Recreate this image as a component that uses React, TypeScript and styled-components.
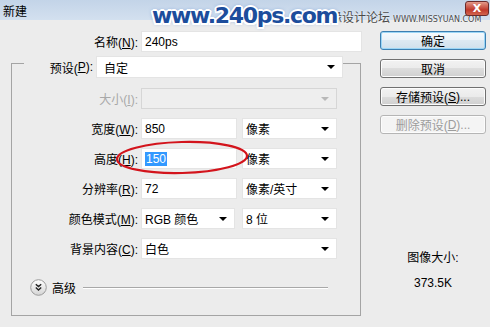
import styled, { createGlobalStyle } from 'styled-components';

const GlobalStyle = createGlobalStyle`
  body {
    margin: 0;
    font-family: "Liberation Sans", "Noto Sans CJK SC", sans-serif;
    font-size: 12px;
    color: #000;
  }
`;

const Window = styled.div`
  position: relative;
  width: 490px;
  height: 327px;
  overflow: hidden;
  background: #ececec;
`;

const TitleBar = styled.div`
  height: 20px;
  display: flex;
  align-items: center;
  padding-left: 3px;
  background: linear-gradient(#c3d4e8, #d3e0ef);
  font-size: 12px;
`;

const Watermark = styled.div`
  position: absolute;
  left: 152px;
  top: 3px;
  font-family: "DejaVu Sans", sans-serif;
  font-weight: bold;
  font-size: 22px;
  letter-spacing: -1.3px;
  color: #1c4d9c;
  text-shadow:
    -2px 0 0 #fff, 2px 0 0 #fff, 0 -2px 0 #fff, 0 2px 0 #fff,
    -1.5px -1.5px 0 #fff, 1.5px 1.5px 0 #fff, -1.5px 1.5px 0 #fff, 1.5px -1.5px 0 #fff,
    0 0 4px #3a6fc0;
`;

const SiteMark = styled.div`
  position: absolute;
  left: 318px;
  top: 8px;
  display: flex;
  align-items: baseline;
  gap: 3px;
  white-space: nowrap;
  color: #4a4a4a;
  text-shadow: 0 0 2px #fff;
  font-size: 12px;
`;

const SiteUrl = styled.span`
  font-family: "DejaVu Sans", sans-serif;
  font-size: 8px;
`;

const CloseButton = styled.div`
  position: absolute;
  right: 1px;
  top: 1px;
  width: 24px;
  height: 15px;
  border-radius: 3px;
  border: 1px solid #6b2b2b;
  background: linear-gradient(#e39a8a, #c0392b 60%, #d2654f);
  color: #fff;
  font-family: "DejaVu Sans", sans-serif;
  font-weight: bold;
  font-size: 11px;
  display: flex;
  align-items: center;
  justify-content: center;
  box-sizing: border-box;
`;

const Content = styled.div`
  display: flex;
  padding-top: 11px;
`;

const LeftPane = styled.div`
  width: 362px;
  display: flex;
  flex-direction: column;
`;

const RightPane = styled.div`
  margin-left: 18px;
  width: 106px;
  display: flex;
  flex-direction: column;
  gap: 9px;
`;

const Row = styled.div`
  display: flex;
  align-items: center;
  height: 21px;
  gap: 3px;
`;

const Label = styled.label<{ $width: number; $disabled?: boolean }>`
  width: ${({ $width }) => $width}px;
  flex-shrink: 0;
  text-align: right;
  white-space: nowrap;
  color: ${({ $disabled }) => ($disabled ? '#a8a8a8' : '#000')};
`;

const Field = styled.div<{ $width: number; $disabled?: boolean; $indent?: number }>`
  position: relative;
  width: ${({ $width }) => $width}px;
  height: 100%;
  box-sizing: border-box;
  display: flex;
  align-items: center;
  padding-left: ${({ $indent }) => $indent ?? 3}px;
  background: ${({ $disabled }) => ($disabled ? '#eeeeee' : '#fff')};
  border: 1px solid ${({ $disabled }) => ($disabled ? '#d6d6d6' : '#e4e4e4')};
  white-space: nowrap;
`;

const Arrow = styled.span<{ $disabled?: boolean }>`
  position: absolute;
  right: 7px;
  top: 50%;
  margin-top: -2px;
  width: 0;
  height: 0;
  border-left: 4px solid transparent;
  border-right: 4px solid transparent;
  border-top: 4px solid ${({ $disabled }) => ($disabled ? '#b8b8b8' : '#000')};
`;

const Selected = styled.span`
  background: #3399ff;
  color: #fff;
  padding: 0 1px;
`;

const GroupBox = styled.div`
  margin: 11px 0 0 11px;
  width: 350px;
  height: 253px;
  box-sizing: border-box;
  border: 1px solid #a4a4a4;
  display: flex;
  flex-direction: column;
`;

const PresetRow = styled(Row)`
  margin: -8px 0 0 12px;
  height: 22px;
  gap: 0;
`;

const PresetLabel = styled.label`
  width: 72px;
  height: 100%;
  box-sizing: border-box;
  padding-right: 3px;
  display: flex;
  align-items: center;
  justify-content: flex-end;
  background: #ececec;
`;

const FieldList = styled.div`
  margin-top: 10px;
  display: flex;
  flex-direction: column;
  gap: 9px;
`;

const Pair = styled.div<{ $gap: number }>`
  display: flex;
  height: 100%;
  gap: ${({ $gap }) => $gap}px;
`;

const AdvancedRow = styled.div`
  margin: 19px 32px 0 18px;
  height: 18px;
  display: flex;
  align-items: center;
  gap: 5px;
`;

const AdvancedLine = styled.div`
  flex: 1;
  height: 1px;
  background: #a8a8a8;
  box-shadow: 0 1px 0 #fff;
  margin-left: 2px;
`;

const Button = styled.div<{ $primary?: boolean; $disabled?: boolean }>`
  height: 19px;
  box-sizing: border-box;
  border-radius: 3px;
  display: flex;
  align-items: center;
  justify-content: center;
  white-space: nowrap;
  color: ${({ $disabled }) => ($disabled ? '#9c9c9c' : '#000')};
  border: 1px solid ${({ $primary, $disabled }) =>
    $primary ? '#3c7fb1' : $disabled ? '#b5b5b5' : '#707070'};
  background: ${({ $primary, $disabled }) =>
    $primary
      ? 'linear-gradient(#f6fafd, #eaf2f8 50%, #dde9f2 50%, #d0e0ec)'
      : $disabled
        ? '#f4f4f4'
        : 'linear-gradient(#f2f2f2, #ebebeb 50%, #dddddd 50%, #cfcfcf)'};
  box-shadow: ${({ $primary }) => ($primary ? 'inset 0 0 0 1px #9cd6f6' : 'inset 0 0 0 1px #fcfcfc')};
`;

const SizeInfo = styled.div`
  margin-top: 108px;
  display: flex;
  flex-direction: column;
  align-items: center;
  gap: 11px;
  line-height: 14px;
`;

const Ellipse = styled.svg`
  position: absolute;
  left: 114px;
  top: 139px;
`;

const AdvancedIcon = () => (
  <svg width="17" height="17" viewBox="0 0 17 17">
    <defs>
      <linearGradient id="adv" x1="0" y1="0" x2="0" y2="1">
        <stop offset="0" stopColor="#ffffff" />
        <stop offset="1" stopColor="#d4d4d4" />
      </linearGradient>
    </defs>
    <circle cx="8.5" cy="8.5" r="7.8" fill="url(#adv)" stroke="#9a9a9a" />
    <path d="M5.8 5.2 L8.5 7.6 L11.2 5.2 M5.8 8.6 L8.5 11 L11.2 8.6" fill="none" stroke="#222" strokeWidth="1.4" />
  </svg>
);

export default function App() {
  return (
    <>
      <GlobalStyle />
      <Window>
        <TitleBar>新建</TitleBar>
        <SiteMark>
          <span>思缘设计论坛</span>
          <SiteUrl>WWW.MISSYUAN.COM</SiteUrl>
        </SiteMark>
        <Watermark>www.240ps.com</Watermark>
        <CloseButton>X</CloseButton>

        <Content>
          <LeftPane>
            <Row>
              <Label $width={138}>名称(<u>N</u>):</Label>
              <Field $width={221}>240ps</Field>
            </Row>

            <GroupBox>
              <PresetRow>
                <PresetLabel>预设(<u>P</u>):</PresetLabel>
                <Field $width={247} $indent={7}>
                  自定
                  <Arrow />
                </Field>
              </PresetRow>

              <FieldList>
                <Row>
                  <Label $width={126} $disabled>大小(<u>I</u>):</Label>
                  <Field $width={196} $disabled>
                    <Arrow $disabled />
                  </Field>
                </Row>
                <Row>
                  <Label $width={126}>宽度(<u>W</u>):</Label>
                  <Pair $gap={5}>
                    <Field $width={96}>850</Field>
                    <Field $width={95}>
                      像素
                      <Arrow />
                    </Field>
                  </Pair>
                </Row>
                <Row>
                  <Label $width={126}>高度(<u>H</u>):</Label>
                  <Pair $gap={5}>
                    <Field $width={96}>
                      <Selected>150</Selected>
                    </Field>
                    <Field $width={95}>
                      像素
                      <Arrow />
                    </Field>
                  </Pair>
                </Row>
                <Row>
                  <Label $width={126}>分辨率(<u>R</u>):</Label>
                  <Pair $gap={5}>
                    <Field $width={96}>72</Field>
                    <Field $width={95}>
                      像素/英寸
                      <Arrow />
                    </Field>
                  </Pair>
                </Row>
                <Row>
                  <Label $width={126}>颜色模式(<u>M</u>):</Label>
                  <Pair $gap={7}>
                    <Field $width={94}>
                      RGB 颜色
                      <Arrow />
                    </Field>
                    <Field $width={95}>
                      8 位
                      <Arrow />
                    </Field>
                  </Pair>
                </Row>
                <Row>
                  <Label $width={126}>背景内容(<u>C</u>):</Label>
                  <Field $width={196}>
                    白色
                    <Arrow />
                  </Field>
                </Row>
              </FieldList>

              <AdvancedRow>
                <AdvancedIcon />
                <span>高级</span>
                <AdvancedLine />
              </AdvancedRow>
            </GroupBox>
          </LeftPane>

          <RightPane>
            <Button $primary>确定</Button>
            <Button>取消</Button>
            <Button>存储预设(<u>S</u>)...</Button>
            <Button $disabled>删除预设(<u>D</u>)...</Button>
            <SizeInfo>
              <span>图像大小:</span>
              <span>373.5K</span>
            </SizeInfo>
          </RightPane>
        </Content>

        <Ellipse width="136" height="38" viewBox="0 0 136 38">
          <ellipse cx="68" cy="18.5" rx="65" ry="15.5" fill="none" stroke="#d3141c" strokeWidth="2.2" transform="rotate(-1.5 68 18.5)" />
        </Ellipse>
      </Window>
    </>
  );
}
